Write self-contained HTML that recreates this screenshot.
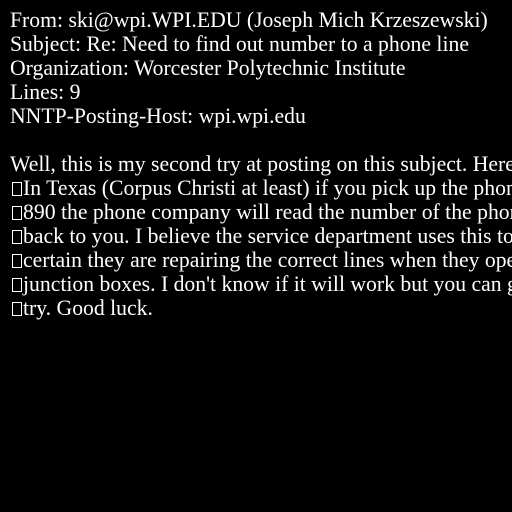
<!DOCTYPE html>
<html><head><style>
html,body{margin:0;padding:0;background:#000;width:512px;height:512px;overflow:hidden}
body{color:#fff;font-family:"Liberation Serif",serif;font-size:21.7px;line-height:24px;white-space:pre}
.w{position:absolute;left:10px;top:8px;width:502px;overflow:hidden}
.b{display:inline-block;width:10px;height:14px;border:1px solid #fff;box-sizing:border-box;margin-left:2px;margin-right:1px;vertical-align:-1px}
</style></head><body><div class="w">From: ski@wpi.WPI.EDU (Joseph Mich Krzeszewski)
Subject: Re: Need to find out number to a phone line
Organization: Worcester Polytechnic Institute
Lines: 9
NNTP-Posting-Host: wpi.wpi.edu

Well, this is my second try at posting on this subject. Here goes.
<span class="b"></span>In Texas (Corpus Christi at least) if you pick up the phone and dial
<span class="b"></span>890 the phone company will read the number of the phone you are on
<span class="b"></span>back to you. I believe the service department uses this to make
<span class="b"></span>certain they are repairing the correct lines when they open up the
<span class="b"></span>junction boxes. I don't know if it will work but you can give it a
<span class="b"></span>try. Good luck.
</div></body></html>
